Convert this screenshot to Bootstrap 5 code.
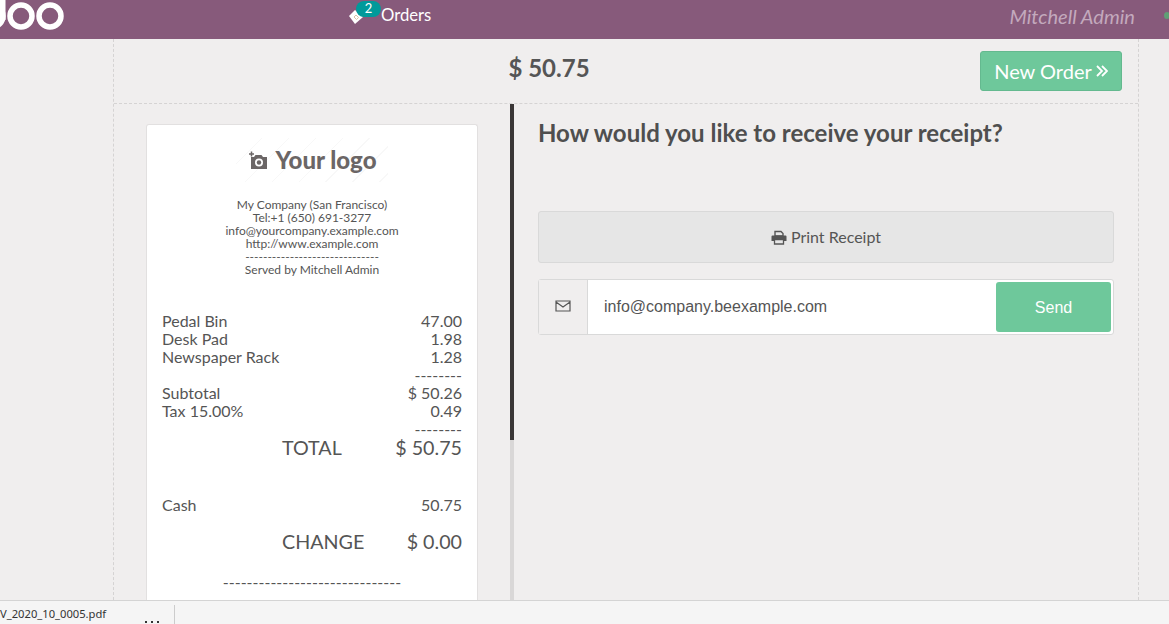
<!DOCTYPE html>
<html lang="en"><head><meta charset="utf-8"><title>Receipt</title>
<link href="https://cdn.jsdelivr.net/npm/bootstrap@5.3.0/dist/css/bootstrap.min.css" rel="stylesheet">
<style>
html,body{height:100%;overflow:hidden}
body{font-family:"Lato",sans-serif;background:#f0eeee;color:#555}
.shell{height:624px}
.topbar{height:39px;background:#875a7b;flex:none}
.logo-mark{width:66px;height:39px;display:block}
.orders-slot{margin-left:283px;width:90px;height:39px;color:#fff;font-size:16.7px}
.ticket{position:absolute;left:0;top:9px}
.count{position:absolute;left:7px;top:1px;width:25px;height:16px;border-radius:10px;background:#009a9a;color:#fff;font-size:13px;line-height:15px;text-align:center}
.orders-label{margin-left:32px;line-height:30px}
.cashier{margin-left:auto;margin-right:34px;color:#c3a9bd;font-size:20.1px;font-style:italic;line-height:32px}
.status-dot{position:absolute;right:-35px;top:12px;width:6px;height:7px;border-radius:50%;background:#5f9f75}
.stage{margin-left:113px;width:1026px;border-left:1px dashed #d5d3d3;border-right:1px dashed #d5d3d3;min-height:0}
.head-row{height:65px;border-bottom:1px dashed #d5d3d3;flex:none}
.due{font-size:24px;font-weight:700;color:#555;line-height:58px;padding-left:4px}
.new-btn{width:142px;height:40px;margin:12px 16px 0 0;background:#6ec89b;border:1px solid #64b98f;border-radius:3px;color:#fff;font-size:20px;line-height:36px}
.left-pane{width:396px;min-height:0;padding:20px 32px 0}
.paper{height:100%;background:#fff;border:1px solid #e2e0e0;border-bottom:0;border-radius:3px 3px 0 0;padding:0 15px;font-size:16px;line-height:18px;color:#555}
.brand{height:70px;color:#6b6666;font-size:24px;font-weight:900;line-height:36px;margin:0 -15px}
.brand-art{width:152px;height:44px;background:repeating-linear-gradient(135deg,#fff 0 18px,#f8f8f8 18px 19px)}
.co{font-size:12px;line-height:13px;margin-top:3px;height:114px}
.rcpt-line{height:18px}
.big-line{font-size:19.7px;line-height:24px;margin-top:-2px}
.big-label{margin-left:120px}
.cash-line{margin-top:36px}
.big-line.change-line{margin-top:16px}
.end-dashes{margin-top:19px;text-align:center}
.rule{width:4px;flex:none;background:#d9d7d7}
.rule-on{height:336px;background:#3a3636}
.right-pane{padding:0 24px 0 24px}
.ask{font-size:24px;font-weight:700;color:#4f4f4f;line-height:30px;margin:14px 0 0}
.print-btn{height:52px;margin-top:63px;background:#e6e6e6;border:1px solid #d9d9d9;border-radius:3px;font-size:16px;color:#555}
.send-row{height:56px;margin-top:16px;background:#fff;border:1px solid #d9d9d9;border-radius:3px}
.mail-cell{width:49px;background:#f0eeee;border-right:1px solid #d9d9d9}
.mail-cell svg{margin-bottom:2px}
.mail-val{font-family:"Liberation Sans",sans-serif;font-size:16px;color:#555;padding-left:16px}
.send-btn{width:115px;height:50px;margin:2px;background:#6ec89b;border-radius:3px;color:#fff;font-size:16px;font-family:"Liberation Sans",sans-serif;padding-top:1px}
.dlbar{height:24px;flex:none;background:#f5f5f5;border-top:1px solid #d4d4d4;font-family:"Noto Sans",sans-serif;font-size:11.2px;color:#333}
.dl-item{width:174px;height:100%;line-height:26px;white-space:nowrap}
.dl-sep{width:1px;height:20px;margin-top:4px;background:#ccc}
.dl-dots{position:absolute;left:144px;bottom:0}
.dl-dots svg{display:block}
</style></head>
<body>
<div class="shell d-flex flex-column">
  <div class="topbar d-flex">
    <svg class="logo-mark" viewBox="0 0 66 39" aria-label="odoo logo"><g fill="none" stroke="#fff" stroke-width="5.500"><circle cx="21" cy="16" r="11"/><circle cx="50" cy="16" r="11"/><circle cx="-8" cy="16" r="11"/></g><rect x="0" y="0" width="5.500" height="20" fill="#fff"/></svg>
    <div class="orders-slot position-relative">
      <svg class="ticket" width="15" height="16" viewBox="0 0 15 16"><path d="M0 7 6 1l8 7-8 7z" fill="#fff"/><path d="M5 8l2-2 2.500 2.500-2 2z" fill="none" stroke="#d8c4a8" stroke-width="1"/></svg>
      <span class="count">2</span>
      <div class="orders-label">Orders</div>
    </div>
    <div class="cashier position-relative">Mitchell Admin<span class="status-dot"></span></div>
  </div>
  <div class="stage flex-grow-1 d-flex flex-column">
    <div class="head-row d-flex">
      <div class="due flex-grow-1 text-center">$ 50.75</div>
      <div class="new-btn d-flex align-items-center justify-content-center">New Order<svg class="ms-1" width="12" height="12" viewBox="0 0 12 12"><path d="M1 1l5 5-5 5M6 1l5 5-5 5" fill="none" stroke="#fff" stroke-width="1.800"/></svg></div>
    </div>
    <div class="d-flex flex-grow-1" style="min-height:0">
      <div class="left-pane">
        <div class="paper">
          <div class="brand d-flex justify-content-center align-items-center">
            <div class="brand-art d-flex justify-content-center align-items-center">
            <svg width="20" height="18" viewBox="0 0 20 18" class="me-2"><path d="M1 3h5M3.500 .5v5" stroke="#6b6666" stroke-width="1.500"/><path d="M3 6h3l1.500-2h6L15 6h4v12H3z" fill="#6b6666"/><circle cx="11" cy="11.500" r="4" fill="#fff"/><circle cx="11" cy="11.500" r="2.200" fill="#6b6666"/></svg>Your logo
            </div>
          </div>
          <div class="co text-center">My Company (San Francisco)<br>Tel:+1 (650) 691-3277<br>info@yourcompany.example.com<br>http://www.example.com<br>------------------------------<br>Served by Mitchell Admin</div>
          <div class="rcpt-line d-flex justify-content-between"><span>Pedal Bin</span><span>47.00</span></div>
          <div class="rcpt-line d-flex justify-content-between"><span>Desk Pad</span><span>1.98</span></div>
          <div class="rcpt-line d-flex justify-content-between"><span>Newspaper Rack</span><span>1.28</span></div>
          <div class="rcpt-line text-end">--------</div>
          <div class="rcpt-line d-flex justify-content-between"><span>Subtotal</span><span>$ 50.26</span></div>
          <div class="rcpt-line d-flex justify-content-between"><span>Tax 15.00%</span><span>0.49</span></div>
          <div class="rcpt-line text-end">--------</div>
          <div class="big-line d-flex justify-content-between"><span class="big-label">TOTAL</span><span>$ 50.75</span></div>
          <div class="rcpt-line cash-line d-flex justify-content-between"><span>Cash</span><span>50.75</span></div>
          <div class="big-line change-line d-flex justify-content-between"><span class="big-label">CHANGE</span><span>$ 0.00</span></div>
          <div class="end-dashes">------------------------------</div>
        </div>
      </div>
      <div class="rule"><div class="rule-on"></div></div>
      <div class="right-pane flex-grow-1">
        <h2 class="ask">How would you like to receive your receipt?</h2>
        <div class="print-btn d-flex align-items-center justify-content-center">
          <svg width="16" height="15" viewBox="0 0 16 15" class="me-1"><path d="M4 1.500h6l2 2V6H4z" fill="none" stroke="#555" stroke-width="1.400"/><path d="M0.500 6.500q0-1 1-1h13q1 0 1 1V11h-3V9h-9v2h-3z" fill="#555"/><path d="M3.500 9.700h9V14h-9z" fill="none" stroke="#555" stroke-width="1.300"/></svg>Print Receipt
        </div>
        <div class="send-row d-flex align-items-center">
          <div class="mail-cell h-100 d-flex align-items-center justify-content-center">
            <svg width="16" height="12" viewBox="0 0 16 12"><path d="M1 1h14v10H1zM1 2l7 5 7-5" fill="none" stroke="#555" stroke-width="1.200"/></svg>
          </div>
          <div class="mail-val flex-grow-1">info@company.beexample.com</div>
          <div class="send-btn d-flex align-items-center justify-content-center">Send</div>
        </div>
      </div>
    </div>
  </div>
  <div class="dlbar d-flex position-relative">
    <div class="dl-item">V_2020_10_0005.pdf</div>
    <div class="dl-sep"></div>
    <div class="dl-dots"><svg width="15" height="3" viewBox="0 0 15 3"><path d="M1 0h2v2H1zM7 0h2v2H7zM13 0h2v2h-2z" fill="#333"/></svg></div>
  </div>
</div>
</body></html>
